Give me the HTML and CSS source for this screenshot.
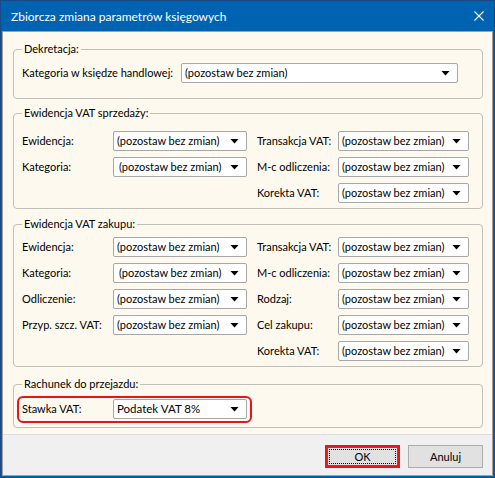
FILE: index.html
```html
<!DOCTYPE html>
<html lang="pl">
<head>
<meta charset="utf-8">
<title>Zbiorcza zmiana parametrów księgowych</title>
<link rel="stylesheet" href="styles.css">
</head>
<body>
<div class="window">
  <div class="titlebar">
    <span class="title">Zbiorcza zmiana parametrów księgowych</span>
    <svg class="close" width="10" height="10" viewBox="0 0 10 10"><path d="M0.5 0.5 L9.5 9.5 M9.5 0.5 L0.5 9.5" stroke="#fff" stroke-width="1.1" fill="none"/></svg>
  </div>
  <div class="client">
    <div class="content">
      <fieldset class="group g1">
        <legend>Dekretacja:</legend>
        <div class="row1">
          <span class="lbl">Kategoria w księdze handlowej:</span>
          <div class="select"><span class="val">(pozostaw bez zmian)</span><i class="arrow"></i></div>
        </div>
      </fieldset>

      <fieldset class="group g2">
        <legend>Ewidencja VAT sprzedaży:</legend>
        <div class="grid">
          <span class="lbl">Ewidencja:</span>
          <div class="select"><span class="val">(pozostaw bez zmian)</span><i class="arrow"></i></div>
          <span class="lbl">Transakcja VAT:</span>
          <div class="select"><span class="val">(pozostaw bez zmian)</span><i class="arrow"></i></div>

          <span class="lbl">Kategoria:</span>
          <div class="select"><span class="val shift">(pozostaw bez zmian)</span><i class="arrow"></i></div>
          <span class="lbl">M-c odliczenia:</span>
          <div class="select"><span class="val">(pozostaw bez zmian)</span><i class="arrow"></i></div>

          <span class="lbl"></span>
          <span></span>
          <span class="lbl">Korekta VAT:</span>
          <div class="select"><span class="val">(pozostaw bez zmian)</span><i class="arrow"></i></div>
        </div>
      </fieldset>

      <fieldset class="group g3">
        <legend>Ewidencja VAT zakupu:</legend>
        <div class="grid">
          <span class="lbl">Ewidencja:</span>
          <div class="select"><span class="val">(pozostaw bez zmian)</span><i class="arrow"></i></div>
          <span class="lbl">Transakcja VAT:</span>
          <div class="select"><span class="val">(pozostaw bez zmian)</span><i class="arrow"></i></div>

          <span class="lbl">Kategoria:</span>
          <div class="select"><span class="val shift">(pozostaw bez zmian)</span><i class="arrow"></i></div>
          <span class="lbl">M-c odliczenia:</span>
          <div class="select"><span class="val">(pozostaw bez zmian)</span><i class="arrow"></i></div>

          <span class="lbl">Odliczenie:</span>
          <div class="select"><span class="val">(pozostaw bez zmian)</span><i class="arrow"></i></div>
          <span class="lbl">Rodzaj:</span>
          <div class="select"><span class="val">(pozostaw bez zmian)</span><i class="arrow"></i></div>

          <span class="lbl">Przyp. szcz. VAT:</span>
          <div class="select"><span class="val">(pozostaw bez zmian)</span><i class="arrow"></i></div>
          <span class="lbl">Cel zakupu:</span>
          <div class="select"><span class="val">(pozostaw bez zmian)</span><i class="arrow"></i></div>

          <span class="lbl"></span>
          <span></span>
          <span class="lbl">Korekta VAT:</span>
          <div class="select"><span class="val">(pozostaw bez zmian)</span><i class="arrow"></i></div>
        </div>
      </fieldset>

      <fieldset class="group g4">
        <legend>Rachunek do przejazdu:</legend>
        <div class="highlight">
          <span class="lbl">Stawka VAT:</span>
          <div class="select"><span class="val strong">Podatek VAT 8%</span><i class="arrow"></i></div>
        </div>
      </fieldset>
    </div>
    <div class="footer">
      <button class="btn ok"><span class="focus">OK</span></button>
      <button class="btn">Anuluj</button>
    </div>
  </div>
</div>
</body>
</html>
```

FILE: styles.css
```css
* { box-sizing: border-box; }

html, body {
  margin: 0;
  padding: 0;
  background: #ffffff;
}

body {
  font-family: Lato, "Liberation Sans", Arial, sans-serif;
  font-size: 11px;
  color: #000;
}

.window {
  width: 495px;
  height: 478px;
  border: 1px solid #184a86;
  background: #0063b1;
  display: flex;
  flex-direction: column;
}

.titlebar {
  height: 30px;
  flex: none;
  display: flex;
  align-items: center;
  padding: 0 10px 0 10px;
}

.title {
  flex: 1;
  color: #fff;
  font-size: 12px;
  line-height: 16px;
  padding-top: 1px;
}

.close {
  display: block;
}

.client {
  flex: 1;
  margin: 0 1px 1px 1px;
  border: 1px solid #9f9f9f;
  display: flex;
  flex-direction: column;
  min-height: 0;
}

.content {
  height: 402px;
  flex: none;
  background: #fdf9ee;
  padding-top: 10px;
}

.group {
  margin: 0 9px 0 10px;
  border: 1px solid #c2bfb8;
  border-radius: 4px;
  padding: 0 13px 0 8px;
  min-width: 0;
}

.group legend {
  padding: 0 2px;
  line-height: 14px;
  height: 14px;
  font-size: 11px;
}

.g1 { padding-top: 7px; padding-bottom: 15px; }
.g2 { margin-top: 7px; padding-top: 11px; padding-bottom: 5px; }
.g3 { margin-top: 8px; padding-top: 6px; padding-bottom: 5px; }
.g4 { margin-top: 10px; padding-top: 5px; padding-bottom: 4px; }

.lbl {
  line-height: 20px;
  height: 20px;
  white-space: nowrap;
}

.row1 {
  display: grid;
  grid-template-columns: 159px 277px;
  height: 20px;
}

.grid {
  display: grid;
  grid-template-columns: 91px 134px 91px 131px;
  row-gap: 6px;
  grid-auto-rows: 20px;
}

.grid > .lbl:nth-child(4n+3) {
  margin-left: 10px;
}

.select {
  height: 20px;
  background: #fff;
  border: 1px solid #a7a7a7;
  border-radius: 2px;
  display: flex;
  align-items: center;
  padding: 0 7px 0 3px;
}

.val {
  flex: 1;
  white-space: nowrap;
  overflow: hidden;
  line-height: 18px;
}

.val.shift { padding-left: 2px; }
.val.strong { font-size: 11.5px; }

.arrow {
  display: block;
  width: 9px;
  height: 5px;
  background: #000;
  clip-path: polygon(0 0, 100% 0, 50% 100%);
  flex: none;
}

.highlight {
  margin-left: -5px;
  width: 235px;
  border: 2px solid #e8141c;
  border-radius: 6px;
  padding: 1px 3px 2px 3px;
  display: grid;
  grid-template-columns: 91px 134px;
}

.footer {
  flex: 1;
  background: #f0f0f0;
  border-top: 1px solid #dcdcdc;
  display: flex;
  justify-content: flex-end;
  align-items: flex-start;
  gap: 8px;
  padding: 10px 9px 0 0;
}

.btn {
  width: 75px;
  height: 23px;
  margin: 0;
  font-family: Lato, "Liberation Sans", Arial, sans-serif;
  font-size: 11px;
  color: #000;
  background: #e1e1e1;
  border: 1px solid #adadad;
  border-radius: 0;
  padding: 0;
  line-height: 20px;
}

.btn.ok {
  border: 2px solid #e8141c;
  box-shadow: inset 0 0 0 1px #5e5e5e;
  padding: 2px;
}

.focus {
  display: block;
  height: 15px;
  line-height: 13px;
  border: 1px dotted #000;
}
```
